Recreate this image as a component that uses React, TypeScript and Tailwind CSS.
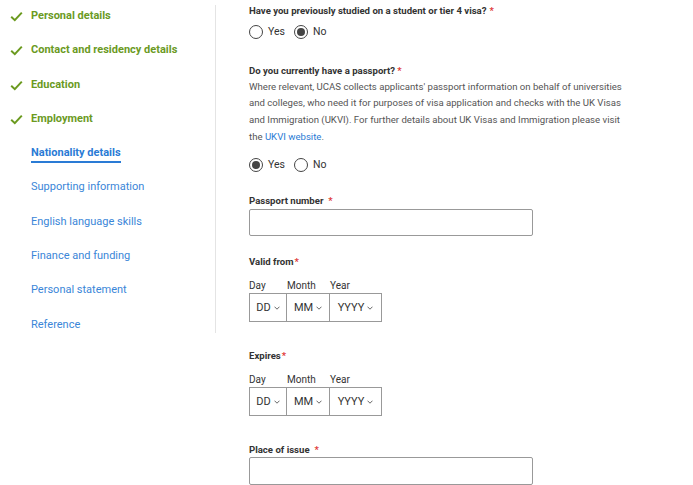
import React from 'react';

const done = ['Personal details', 'Contact and residency details', 'Education', 'Employment'];
const todo = ['Supporting information', 'English language skills', 'Finance and funding', 'Personal statement', 'Reference'];

function Check() {
  return (
    <svg width="13" height="11" viewBox="0 0 13 11" className="shrink-0">
      <path d="M1.2 5.8 L4.8 9.2 L11.8 1.6" fill="none" stroke="#6b9a1f" strokeWidth="2" />
    </svg>
  );
}

function Radio({ checked, label }: { checked?: boolean; label: string }) {
  return (
    <label className="flex items-center gap-[5px]">
      <span className="w-[14px] h-[14px] rounded-full border border-[#444] flex items-center justify-center">
        {checked && <span className="w-[8px] h-[8px] rounded-full bg-[#444]" />}
      </span>
      <span className="text-[10.5px] text-[#333]">{label}</span>
    </label>
  );
}

function Req({ gap = '' }: { gap?: string }) {
  return <span className={`text-[#e03a3a] ${gap}`}>*</span>;
}

function Chevron() {
  return (
    <svg width="6" height="4" viewBox="0 0 6 4" className="ml-[3px]">
      <path d="M0.5 0.7 L3 3.2 L5.5 0.7" fill="none" stroke="#555" strokeWidth="0.9" />
    </svg>
  );
}

function DateField({ label }: { label: string }) {
  return (
    <div className="flex flex-col">
      <div className="text-[9.6px] font-bold text-[#333] leading-[14px]">
        {label}
        <Req gap="ml-[1px]" />
      </div>
      <div className="flex text-[10px] text-[#333] mt-[11px] leading-[12px]">
        <span className="w-[38px]">Day</span>
        <span className="w-[43px]">Month</span>
        <span>Year</span>
      </div>
      <div className="flex mt-[1px]">
        <div className="w-[38px] h-[29px] border border-[#999] flex items-center justify-center text-[11px] text-[#333]">
          DD<Chevron />
        </div>
        <div className="w-[43px] h-[29px] border border-l-0 border-[#999] flex items-center justify-center text-[11px] text-[#333]">
          MM<Chevron />
        </div>
        <div className="w-[52px] h-[29px] border border-l-0 border-[#999] flex items-center justify-center text-[11px] text-[#333]">
          YYYY<Chevron />
        </div>
      </div>
    </div>
  );
}

export default function App() {
  return (
    <div className="w-[693px] h-[485px] overflow-hidden bg-white flex font-['Roboto',sans-serif]">
      <div className="w-[216px] shrink-0 pt-[5px]">
        <div className="border-r border-[#e4e4e4] h-[328px] flex flex-col">
          {done.map((t) => (
            <div key={t} className="h-[34.3px] shrink-0 flex items-start pl-[10px] pt-[4px] gap-[8px]">
              <div className="pt-[2px]">
                <Check />
              </div>
              <span className="text-[11px] font-bold text-[#6b9a1f] leading-[14px]">{t}</span>
            </div>
          ))}
          <div className="h-[34.3px] shrink-0 flex items-start pl-[31px] pt-[4px]">
            <span className="text-[11px] font-bold text-[#2a7bd5] leading-[14px] border-b-2 border-[#2a7bd5] pb-[1px]">
              Nationality details
            </span>
          </div>
          {todo.map((t) => (
            <div key={t} className="h-[34.3px] shrink-0 flex items-start pl-[31px] pt-[4px]">
              <span className="text-[11px] text-[#3a86d8] leading-[14px]">{t}</span>
            </div>
          ))}
        </div>
      </div>

      <div className="pl-[33px] pt-[4px] flex flex-col">
        <div className="text-[9.6px] font-bold text-[#333] leading-[14px]">
          Have you previously studied on a student or tier 4 visa?<Req gap="ml-[3px]" />
        </div>
        <div className="flex gap-[9px] mt-[6px]">
          <Radio label="Yes" />
          <Radio label="No" checked />
        </div>

        <div className="text-[9.6px] font-bold text-[#333] leading-[14px] mt-[24px]">
          Do you currently have a passport?<Req gap="ml-[2px]" />
        </div>
        <p className="text-[9.6px] text-[#555] leading-[16.6px] w-[385px] mt-[1px]">
          Where relevant, UCAS collects applicants' passport information on behalf of universities and colleges, who
          need it for purposes of visa application and checks with the UK Visas and Immigration (UKVI). For further
          details about UK Visas and Immigration please visit the <span className="text-[#2a7bd5]">UKVI website</span>.
        </p>
        <div className="flex gap-[9px] mt-[12px]">
          <Radio label="Yes" checked />
          <Radio label="No" />
        </div>

        <div className="text-[9.6px] font-bold text-[#333] leading-[12px] mt-[22px]">
          Passport number&nbsp; <Req />
        </div>
        <div className="w-[284px] h-[29px] border border-[#999] rounded-[2px] mt-[2px]" />

        <div className="mt-[19px]">
          <DateField label="Valid from" />
        </div>
        <div className="mt-[27px]">
          <DateField label="Expires" />
        </div>

        <div className="text-[9.6px] font-bold text-[#333] leading-[12px] mt-[28px]">
          Place of issue&nbsp; <Req />
        </div>
        <div className="w-[284px] h-[29px] border border-[#999] rounded-[2px] mt-[1px]" />
      </div>
    </div>
  );
}
